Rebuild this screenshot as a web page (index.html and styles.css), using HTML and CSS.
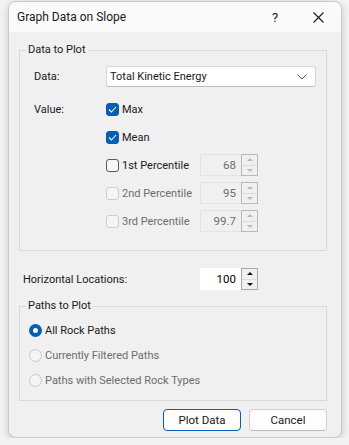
FILE: index.html
```html
<!DOCTYPE html>
<html lang="en">
<head>
    <meta charset="UTF-8">
    <title>Graph Data on Slope</title>
    <link rel="stylesheet" href="styles.css">
</head>
<body>
    <div class="window">
        <div class="titlebar">
            <span class="title">Graph Data on Slope</span>
            <span class="help">?</span>
            <span class="close">
                <svg width="11" height="11" viewBox="0 0 11 11"><path d="M0.5 0.5 L10.5 10.5 M10.5 0.5 L0.5 10.5" stroke="#1a1a1a" stroke-width="1.1" fill="none"/></svg>
            </span>
        </div>

        <div class="content">
            <fieldset class="group data-group">
                <legend>Data to Plot</legend>

                <div class="field-row combo-row">
                    <span class="field-label">Data:</span>
                    <div class="combo">
                        <span>Total Kinetic Energy</span>
                        <svg width="10" height="6" viewBox="0 0 10 6"><path d="M0.5 0.5 L5 5 L9.5 0.5" stroke="#555" stroke-width="1" fill="none"/></svg>
                    </div>
                </div>

                <div class="field-row">
                    <span class="field-label">Value:</span>
                    <label class="check checked"><span class="box"><svg width="9" height="7" viewBox="0 0 9 7"><path d="M1 3.5 L3.4 6 L8 1" stroke="#fff" stroke-width="1.1" fill="none"/></svg></span>Max</label>
                </div>

                <div class="field-row">
                    <span class="field-label"></span>
                    <label class="check checked"><span class="box"><svg width="9" height="7" viewBox="0 0 9 7"><path d="M1 3.5 L3.4 6 L8 1" stroke="#fff" stroke-width="1.1" fill="none"/></svg></span>Mean</label>
                </div>

                <div class="field-row">
                    <span class="field-label"></span>
                    <label class="check"><span class="box"></span>1st Percentile</label>
                    <div class="spin disabled">
                        <span class="spin-value">68</span>
                        <span class="spin-buttons"><span class="up"></span><span class="down"></span></span>
                    </div>
                </div>

                <div class="field-row">
                    <span class="field-label"></span>
                    <label class="check disabled"><span class="box"></span>2nd Percentile</label>
                    <div class="spin disabled">
                        <span class="spin-value">95</span>
                        <span class="spin-buttons"><span class="up"></span><span class="down"></span></span>
                    </div>
                </div>

                <div class="field-row">
                    <span class="field-label"></span>
                    <label class="check disabled"><span class="box"></span>3rd Percentile</label>
                    <div class="spin disabled">
                        <span class="spin-value">99.7</span>
                        <span class="spin-buttons"><span class="up"></span><span class="down"></span></span>
                    </div>
                </div>
            </fieldset>

            <div class="hl-row">
                <span class="hl-label">Horizontal Locations:</span>
                <div class="spin">
                    <span class="spin-value">100</span>
                    <span class="spin-buttons"><span class="up"></span><span class="down"></span></span>
                </div>
            </div>

            <fieldset class="group paths-group">
                <legend>Paths to Plot</legend>
                <label class="radio checked"><span class="circle"></span>All Rock Paths</label>
                <label class="radio disabled"><span class="circle"></span>Currently Filtered Paths</label>
                <label class="radio disabled"><span class="circle"></span>Paths with Selected Rock Types</label>
            </fieldset>

            <div class="buttons">
                <button class="btn default">Plot Data</button>
                <button class="btn">Cancel</button>
            </div>
        </div>
    </div>
</body>
</html>
```

FILE: styles.css
```css
body {
    margin: 0;
    background: #f3f3f3;
    font-family: Roboto, "Noto Sans", sans-serif;
    font-size: 11px;
    color: #1a1a1a;
}
.window {
    margin: 1px 0 0 8px;
    width: 332px;
    height: 435px;
    border: 1px solid #c9c9c9;
    border-radius: 8px;
    background: #f0f0f0;
    box-shadow: 0 2px 8px rgba(0, 0, 0, 0.18);
    overflow: hidden;
}
.titlebar {
    height: 30px;
    display: flex;
    align-items: center;
    padding-left: 8px;
    background: #fafafa;
}
.title {
    flex: 1;
    font-size: 12px;
}
.help {
    width: 12px;
    margin-right: 29px;
    font-size: 13px;
}
.close {
    display: flex;
    margin-right: 17px;
}
.content {
    padding: 10px 14px 0 10px;
}
.group {
    margin: 0;
    border: 1px solid #d9d9d9;
    min-inline-size: 0;
}
.group legend {
    padding: 0 2px;
    line-height: 16px;
}
.data-group {
    padding: 8px 0 18px 14px;
    display: flex;
    flex-direction: column;
    gap: 6px;
}
.data-group legend {
    margin-left: -8px;
}
.field-row {
    display: flex;
    align-items: center;
    height: 22px;
    white-space: nowrap;
}
.combo-row {
    height: 21px;
    margin-bottom: 5px;
}
.field-label {
    width: 72px;
}
.combo {
    height: 19px;
    border: 1px solid #d6d6d6;
    border-bottom-color: #bdbdbd;
    border-radius: 3px;
    background: #fff;
    display: flex;
    align-items: center;
    justify-content: space-between;
    padding: 0 8px 0 3px;
    width: 197px;
}
.check {
    width: 94px;
    display: flex;
    align-items: center;
    gap: 3px;
}
.check .box {
    width: 11px;
    height: 11px;
    border: 1px solid #5b5b5b;
    border-radius: 3px;
    background: #f7f7f7;
    display: flex;
    align-items: center;
    justify-content: center;
}
.check.checked .box {
    border-color: #005fb8;
    background: #005fb8;
}
.check.disabled {
    color: #6d6d6d;
}
.check.disabled .box {
    border-color: #cdcdcd;
    background: #f5f5f5;
}
.spin {
    width: 58px;
    height: 22px;
    display: flex;
}
.spin-value {
    flex: 1;
    border: 1px solid #e3e3e3;
    border-right: none;
    background: #f0f0f0;
    text-align: right;
    padding-right: 5px;
    line-height: 20px;
    color: #6d6d6d;
    font-size: 11.5px;
}
.spin-buttons {
    width: 15px;
    border: 1px solid #b9b9b9;
    display: flex;
    flex-direction: column;
    gap: 1px;
    background: #dcdcdc;
}
.spin-buttons span {
    flex: 1;
    background: #f0f0f0;
    display: flex;
    align-items: center;
    justify-content: center;
}
.spin-buttons .up::before {
    content: "";
    border-left: 3px solid transparent;
    border-right: 3px solid transparent;
    border-bottom: 3px solid #111;
}
.spin-buttons .down::before {
    content: "";
    border-left: 3px solid transparent;
    border-right: 3px solid transparent;
    border-top: 3px solid #111;
}
.spin.disabled .up::before {
    border-bottom-color: #b8b8b8;
}
.spin.disabled .down::before {
    border-top-color: #b8b8b8;
}
.spin:not(.disabled) .spin-value {
    background: #fff;
    border-color: #fff;
    color: #000;
}
.spin:not(.disabled) .spin-buttons {
    border-color: #a8a8a8;
}
.hl-row {
    display: flex;
    align-items: center;
    height: 22px;
    margin-top: 17px;
    padding-left: 4px;
}
.hl-label {
    width: 177px;
}
.paths-group {
    margin-top: 8px;
    padding: 6px 0 10px 9px;
    display: flex;
    flex-direction: column;
    gap: 5px;
}
.paths-group legend {
    margin-left: -3px;
}
.radio {
    height: 20px;
    display: flex;
    align-items: center;
    gap: 3px;
}
.radio .circle {
    width: 11px;
    height: 11px;
    border: 1px solid #c6c6c6;
    border-radius: 50%;
    background: #f5f5f5;
}
.radio.checked .circle {
    width: 5px;
    height: 5px;
    border: 4px solid #005fb8;
    background: #fff;
}
.radio.disabled {
    color: #6d6d6d;
}
.buttons {
    display: flex;
    justify-content: flex-end;
    gap: 8px;
    margin-top: 8px;
}
.btn {
    width: 78px;
    height: 22px;
    font-family: inherit;
    font-size: 11.5px;
    color: #1a1a1a;
    background: #fdfdfd;
    border: 1px solid #d0d0d0;
    border-bottom-color: #bcbcbc;
    border-radius: 4px;
    padding: 0;
}
.btn.default {
    border-color: #005fb8;
}
```
